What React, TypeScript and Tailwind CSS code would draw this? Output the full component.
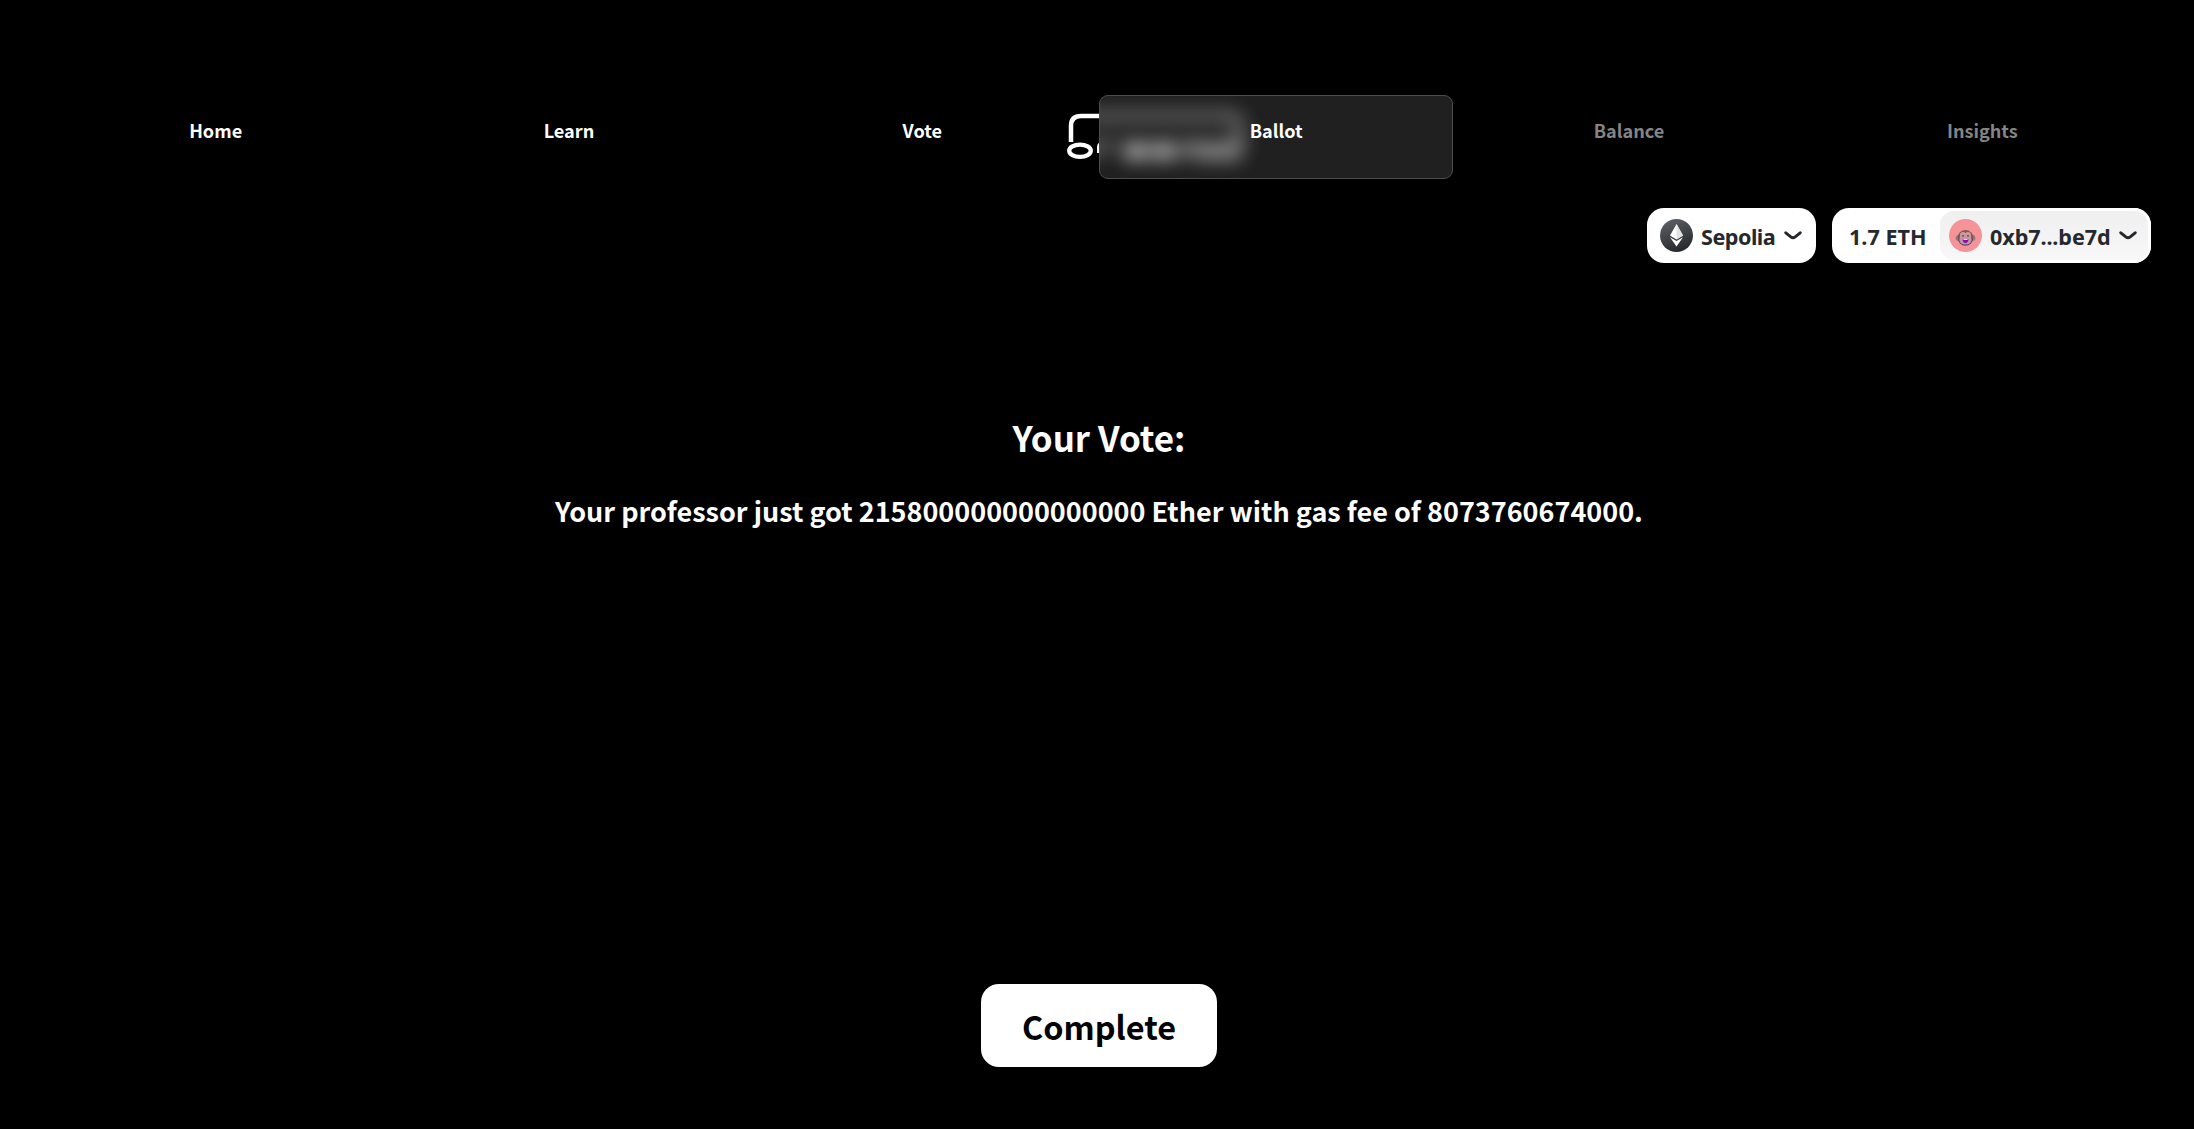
import React from "react";

const steps = [
  { label: "Home", state: "done" },
  { label: "Learn", state: "done" },
  { label: "Vote", state: "done" },
  { label: "Ballot", state: "current" },
  { label: "Balance", state: "todo" },
  { label: "Insights", state: "todo" },
];

function LogoShape() {
  return (
    <svg width="182" height="54" viewBox="0 0 182 54" fill="none" stroke="#fff" strokeWidth="4.5">
      <path d="M6 32V16Q6 6 16 6H165Q174 6 174 14V44" />
      <ellipse cx="15" cy="40.7" rx="10.8" ry="6.1" strokeWidth="4.3" />
      <path d="M34 43V37Q34 33.5 39 33.5H49" strokeWidth="4" />
      <g strokeWidth="5">
        <ellipse cx="71" cy="41" rx="11" ry="6" />
        <path d="M61 41H81" />
        <ellipse cx="99" cy="41" rx="10" ry="6" />
        <path d="M90 41H108" />
        <path d="M120 48V35H130" />
        <ellipse cx="140" cy="41" rx="9" ry="6" />
        <ellipse cx="163" cy="41" rx="11" ry="6" />
      </g>
    </svg>
  );
}

function Chevron() {
  return (
    <svg width="18" height="9" viewBox="0 0 18 9" fill="none" stroke="#25292e" strokeWidth="3" strokeLinecap="round">
      <path d="M1.8 1.8L6.8 5.9Q9 7.6 11.2 5.9L16.2 1.8" />
    </svg>
  );
}

function EthIcon() {
  return (
    <svg width="33" height="33" viewBox="0 0 33 33">
      <defs>
        <linearGradient id="eth" x1="0.2" y1="0" x2="0.6" y2="1">
          <stop offset="0" stopColor="#5d6066" />
          <stop offset="1" stopColor="#25292e" />
        </linearGradient>
      </defs>
      <circle cx="16.5" cy="16.5" r="16.5" fill="url(#eth)" />
      <path d="M16.5 5L23 16.6L16.5 20.4L10 16.6Z" fill="#fff" />
      <path d="M16.5 5V20.4L23 16.6Z" fill="#e2e2e4" />
      <path d="M10 18.3L16.5 22L23 18.3L16.5 27.4Z" fill="#fff" />
    </svg>
  );
}

function MonkeyAvatar() {
  return (
    <svg width="33" height="33" viewBox="0 0 33 33">
      <defs>
        <linearGradient id="fur" x1="0" y1="0" x2="0" y2="1">
          <stop offset="0" stopColor="#8c5a50" />
          <stop offset="1" stopColor="#54455c" />
        </linearGradient>
        <linearGradient id="face" x1="0" y1="0" x2="0" y2="1">
          <stop offset="0" stopColor="#d69a94" />
          <stop offset="1" stopColor="#b590b5" />
        </linearGradient>
      </defs>
      <circle cx="16.5" cy="16.5" r="16.5" fill="#f59399" />
      <ellipse cx="9.5" cy="19" rx="2.9" ry="3" fill="#9b777a" />
      <ellipse cx="23.5" cy="19" rx="2.9" ry="3" fill="#9b777a" />
      <ellipse cx="16.5" cy="18.8" rx="7.8" ry="7.9" fill="url(#fur)" />
      <path d="M11 16Q11 13 14 13Q15.7 13 16.5 14Q17.3 13 19 13Q22 13 22 16L22.6 21Q22 25.5 16.5 25.5Q11 25.5 10.4 21Z" fill="url(#face)" />
      <circle cx="14" cy="16.9" r="0.8" fill="#423343" />
      <circle cx="19" cy="16.9" r="0.8" fill="#423343" />
      <path d="M13.6 20.2H19.4Q19.2 24 16.5 24Q13.8 24 13.6 20.2Z" fill="#8f08a8" />
      <path d="M14.2 20.2H18.8L18.3 21H14.7Z" fill="#fff" />
    </svg>
  );
}

export default function App() {
  return (
    <div className="flex h-[1129px] w-full flex-col overflow-hidden bg-black pt-[95px] font-['Noto_Sans_CJK_JP',sans-serif] font-bold text-white">
      <nav className="relative ml-[39px] grid h-[84px] w-[2120px] grid-cols-6">
        <div className="absolute left-[1026px] top-[15px] h-[54px] w-[34px] overflow-hidden">
          <LogoShape />
        </div>
        {steps.map((s) => (
          <div
            key={s.label}
            className={
              s.state === "current"
                ? "relative mr-[-1px] flex justify-center overflow-hidden rounded-[9px] border border-[#4d4d4d] bg-[#202020] pt-[20px] text-[18.1px] leading-[28px]"
                : s.state === "done"
                  ? "relative flex justify-center pt-[21px] text-[18.1px] leading-[28px]"
                  : "relative flex justify-center pt-[21px] text-[18.1px] leading-[28px] text-[#858585]"
            }
          >
            {s.state === "current" && (
              <div className="absolute left-[-35px] top-[14px] opacity-80 blur-[9.5px]">
                <LogoShape />
              </div>
            )}
            <span className="relative">{s.label}</span>
          </div>
        ))}
      </nav>

      <div className="mr-[43px] mt-[29px] flex h-[55px] justify-end gap-[16px] font-['Noto_Sans',sans-serif] text-[21.6px] leading-[30px] text-[#25292e]">
        <button className="flex w-[169px] items-center rounded-[17px] bg-white pl-[13px]">
          <EthIcon />
          <span className="ml-[8px] w-[76px] whitespace-nowrap pt-[2px] text-left tracking-[-0.5px]">Sepolia</span>
          <span className="ml-[7px]"><Chevron /></span>
        </button>
        <button className="flex w-[319px] items-center rounded-[17px] bg-white">
          <span className="w-[104px] whitespace-nowrap pl-[17px] pt-[2px] text-left">1.7 ETH</span>
          <span className="ml-[1px] flex h-[55px] flex-1 items-center rounded-[17px] border-[3px] border-white bg-linear-to-b from-[#efefef] to-[#f8f8f8] pl-[9px]">
            <MonkeyAvatar />
            <span className="ml-[8px] w-[122px] whitespace-nowrap pt-[2px] text-left tracking-[-0.1px]">0xb7...be7d</span>
            <span className="ml-[7px]"><Chevron /></span>
          </span>
        </button>
      </div>

      <main className="mr-[-4px] flex flex-1 flex-col items-center">
        <h1 className="mt-[148px] text-[34.9px] leading-[52px]">Your Vote:</h1>
        <p className="mt-[28px] text-[27px] leading-[40px]">
          Your professor just got 215800000000000000 Ether with gas fee of 8073760674000.
        </p>
        <button className="mb-[62px] mt-auto h-[83px] w-[236px] rounded-[18px] bg-white text-[32.4px] leading-[50px] text-black">
          Complete
        </button>
      </main>
    </div>
  );
}
